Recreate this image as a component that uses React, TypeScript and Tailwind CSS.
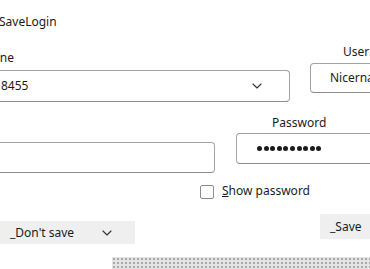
import React from "react";

function Chevron({ className = "" }: { className?: string }) {
  return (
    <svg width="10" height="6" viewBox="0 0 10 6" className={className} fill="none">
      <path d="M1 1l4 4 4-4" stroke="#333" strokeWidth="1.1" strokeLinecap="round" strokeLinejoin="round" />
    </svg>
  );
}

export default function App() {
  return (
    <div className="w-[370px] h-[269px] overflow-hidden bg-white text-[12px] leading-[16px] text-[#1b1b1b] font-['Noto_Sans',sans-serif] flex flex-col">
      {/* title */}
      <div className="mt-[14px] ml-[-1px] h-[16px] whitespace-nowrap">SaveLogin</div>

      {/* row 1 */}
      <div className="mt-[14px] flex items-start">
        <div className="mt-[6px] flex flex-col shrink-0">
          <div className="w-[14px] h-[16px] flex justify-end whitespace-nowrap">
            <span>ne</span>
          </div>
          <div className="mt-[4px] ml-[-4px] w-[294px] h-[32px] border border-[#a3a3a3] border-b-[#8c8c8c] rounded-[4px] flex items-center pl-[4px] pr-[27px]">
            <span className="flex-1 whitespace-nowrap">8455</span>
            <Chevron />
          </div>
        </div>
        <div className="ml-[20px] flex flex-col shrink-0">
          <div className="ml-[33px] h-[16px] whitespace-nowrap">Username</div>
          <div className="mt-[3px] w-[80px] h-[30px] border border-[#a3a3a3] border-b-[#8c8c8c] rounded-[4px] flex items-center pl-[19px] whitespace-nowrap overflow-hidden">
            Nicername
          </div>
        </div>
      </div>

      {/* row 2 */}
      <div className="mt-[13px] flex items-start">
        <div className="shrink-0 mt-[27px] ml-[-4px] w-[219px] h-[31px] border border-[#a3a3a3] border-b-[#8c8c8c] rounded-[4px]" />
        <div className="shrink-0 ml-[21px] flex flex-col">
          <div className="ml-[36px] h-[16px] whitespace-nowrap">Password</div>
          <div className="mt-[2px] w-[144px] h-[31px] border border-[#a3a3a3] border-b-[#8c8c8c] rounded-[4px] flex items-center pl-[20px] gap-[1.6px]">
            {Array.from({ length: 10 }).map((_, i) => (
              <span key={i} className="w-[5px] h-[5px] rounded-full bg-[#1b1b1b]" />
            ))}
          </div>
        </div>
      </div>

      {/* checkbox */}
      <div className="mt-[10px] ml-[200px] flex items-start h-[16px]">
        <span className="mt-[2px] w-[14px] h-[14px] border border-[#8c8c8c] rounded-[2px] bg-white" />
        <span className="ml-[8px] whitespace-nowrap">
          <span className="underline">S</span>how password
        </span>
      </div>

      {/* buttons */}
      <div className="mt-[15px] flex items-start">
        <div className="mt-[7px] w-[135px] h-[23px] bg-[#efefef] flex items-center">
          <span className="pl-[10px] whitespace-nowrap">_Don't save</span>
          <Chevron className="ml-[28px]" />
        </div>
        <div className="ml-auto w-[50px] h-[25px] bg-[#efefef] flex items-center pl-[10px] whitespace-nowrap">
          _Save
        </div>
      </div>

      {/* bottom strip */}
      <div className="mt-[13px] flex">
        <div className="w-[112px] h-[13px] border-b border-[#bdbdbd]" />
        <div className="flex-1 h-[14px] bg-[#e4e4e4] bg-[radial-gradient(#a8a8a8_0.8px,transparent_1px)] bg-[length:4px_4px]" />
      </div>
    </div>
  );
}
